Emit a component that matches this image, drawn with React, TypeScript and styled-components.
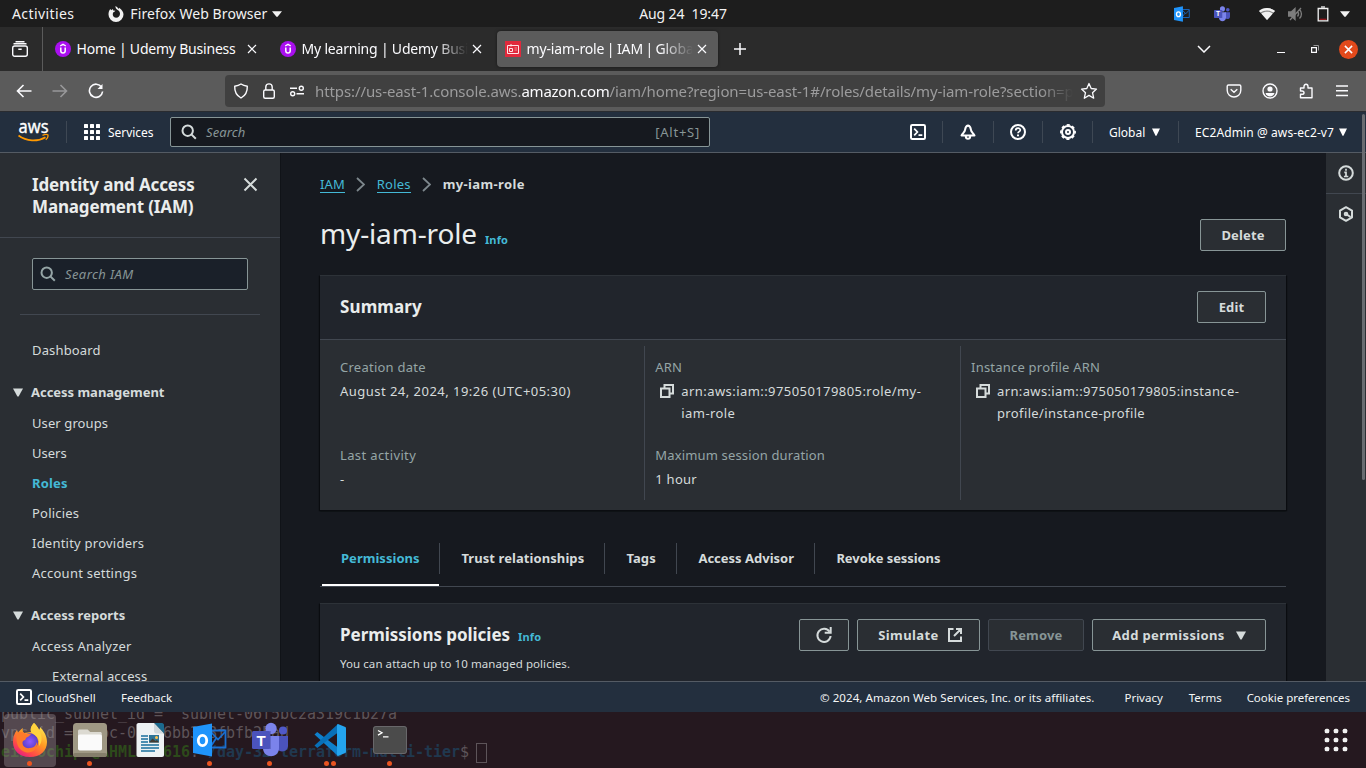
import React from "react";
import styled, { createGlobalStyle, css } from "styled-components";

const Global = createGlobalStyle`
  * { box-sizing: border-box; }
  html, body { margin: 0; padding: 0; background: #16191f; overflow: hidden; }
  svg { display: block; flex: none; }
`;

type Track = { $ls?: number };
const track = css<Track>`
  letter-spacing: ${(p) => p.$ls ?? 0.15}px;
  white-space: nowrap;
`;
const ui = `"Noto Sans", "Open Sans", sans-serif`;

const Screen = styled.div`
  width: 1366px;
  height: 768px;
  display: flex;
  flex-direction: column;
  overflow: hidden;
  position: relative;
  font-family: ${ui};
  font-size: 13px;
  color: #d5dbdb;
`;

/* ---------- desktop top bar ---------- */
const TopBar = styled.div`
  height: 27px;
  flex: none;
  background: #1d1d1d;
  display: grid;
  grid-template-columns: 1fr auto 1fr;
  align-items: center;
  color: #f2f2f2;
  font-size: 14px;
`;
const TopLeft = styled.div`
  display: flex;
  align-items: center;
  padding-left: 12px;
`;
const TopText = styled.span<Track & { $ml?: number }>`
  ${track}
  line-height: 27px;
  margin-left: ${(p) => p.$ml ?? 0}px;
`;
const TopRight = styled.div`
  display: flex;
  align-items: center;
  justify-content: flex-end;
  padding-right: 16px;
`;
const Slot = styled.span<{ $mr?: number; $ml?: number }>`
  display: flex;
  margin-right: ${(p) => p.$mr ?? 0}px;
  margin-left: ${(p) => p.$ml ?? 0}px;
`;

/* ---------- browser ---------- */
const TabStrip = styled.div`
  height: 44px;
  flex: none;
  background: #2b2b2b;
  display: flex;
  align-items: center;
`;
const TabView = styled.div`
  width: 43px;
  height: 44px;
  border-right: 1px solid #5b5b5b;
  display: flex;
  align-items: center;
  padding-left: 11px;
  margin-right: 4px;
`;
const BrowserTab = styled.div<{ $active?: boolean }>`
  width: 221px;
  height: 36px;
  margin-right: 4px;
  border-radius: 4px;
  padding-left: 8px;
  display: flex;
  align-items: center;
  background: ${(p) => (p.$active ? "#5b5b5b" : "transparent")};
  box-shadow: ${(p) => (p.$active ? "0 0 3px rgba(0,0,0,.5)" : "none")};
`;
const TabTitle = styled.span<Track & { $fade?: boolean; $ws?: number }>`
  ${track}
  width: 167px;
  margin-left: 5px;
  padding-left: 0.5px;
  overflow: hidden;
  font-size: 14px;
  line-height: 22px;
  word-spacing: ${(p) => p.$ws ?? 0}px;
  color: #fbfbfe;
  ${(p) => p.$fade && "mask-image: linear-gradient(to left, transparent 0, #000 32px);"}
`;
const WindowControls = styled.div`
  margin-left: auto;
  display: flex;
  align-items: center;
  padding-right: 8px;
`;
const BrowserActions = styled.div`
  margin-left: auto;
  display: flex;
  align-items: center;
`;
const CloseWindow = styled.span`
  width: 19px;
  height: 19px;
  border-radius: 50%;
  background: #e2491b;
  display: flex;
  align-items: center;
  justify-content: center;
`;
const Toolbar = styled.div`
  height: 41px;
  flex: none;
  background: #5b5b5b;
  border-bottom: 1px solid #2a2c30;
  display: flex;
  align-items: center;
  padding-left: 16px;
  padding-right: 18px;
`;
const UrlBar = styled.div`
  width: 880px;
  height: 32px;
  margin-left: 121px;
  border-radius: 4px;
  background: #404040;
  display: flex;
  align-items: center;
  padding-left: 8px;
`;
const Url = styled.span`
  width: 758px;
  margin-left: 10px;
  margin-right: 7px;
  overflow: hidden;
  white-space: nowrap;
  font-size: 15px;
  line-height: 24px;
  letter-spacing: -0.1px;
  color: #9c9c9d;
  mask-image: linear-gradient(to left, transparent 0, #000 32px);
`;
const Domain = styled.span`
  color: #fbfbfe;
  letter-spacing: -0.25px;
`;

/* ---------- console header ---------- */
const Nav = styled.div`
  height: 41px;
  flex: none;
  background: #232f3e;
  border-bottom: 1px solid #545b64;
  display: flex;
  align-items: center;
  padding-left: 18px;
  font-size: 12px;
  color: #fff;
`;
const NavText = styled.span<Track & { $w?: number }>`
  ${track}
  width: ${(p) => (p.$w ? `${p.$w}px` : "auto")};
  line-height: 20px;
  padding-top: 2px;
`;
const NavDivider = styled.span<{ $l: number; $r: number }>`
  width: 1px;
  height: 22px;
  background: #3e4854;
  margin: 0 ${(p) => p.$r}px 0 ${(p) => p.$l}px;
`;
const NavSearch = styled.div`
  width: 540px;
  height: 30px;
  margin-left: 16px;
  background: #16191f;
  border: 1px solid #879596;
  border-radius: 2px;
  display: flex;
  align-items: center;
  padding: 0 9px 0 10px;
  color: #879596;
  font-size: 13px;
`;
const Placeholder = styled.span<Track>`
  ${track}
  font-style: italic;
  flex: 1;
  margin-left: 9px;
`;
const Shortcut = styled.span`
  letter-spacing: 0.75px;
`;

/* ---------- page ---------- */
const Body = styled.div`
  height: 528px;
  flex: none;
  display: flex;
  background: #16191f;
  overflow: hidden;
`;
const Sidebar = styled.div`
  width: 281px;
  flex: none;
  background: #2a2e33;
  border-right: 1px solid #101318;
  overflow: hidden;
`;
const SideHead = styled.div`
  height: 85px;
  padding: 21px 22px 0 32px;
  border-bottom: 1px solid #414750;
  display: flex;
  justify-content: space-between;
`;
const SideTitle = styled.div<Track>`
  ${track}
  font-size: 17px;
  line-height: 22px;
  font-weight: 700;
  color: #eaeded;
`;
const SideClose = styled.span`
  padding-top: 3px;
`;
const SideSearch = styled.div`
  width: 216px;
  height: 32px;
  margin: 20px 0 24px 32px;
  border: 1px solid #879596;
  border-radius: 2px;
  background: #1a2029;
  display: flex;
  align-items: center;
  padding-left: 7px;
  color: #879596;
`;
const Rule = styled.div`
  height: 1px;
  margin: 0 20px;
  background: #414750;
`;
const NavLink = styled.div<Track & { $active?: boolean; $indent?: boolean; $top?: number }>`
  ${track}
  height: 30px;
  line-height: 30px;
  margin-top: ${(p) => p.$top ?? 0}px;
  padding-left: ${(p) => (p.$indent ? 52 : 32)}px;
  font-weight: ${(p) => (p.$active ? 700 : 400)};
  color: ${(p) => (p.$active ? "#44b9d6" : "#d5dbdb")};
`;
const NavGroup = styled.div<Track>`
  ${track}
  height: 30px;
  margin-top: 12px;
  padding-left: 13px;
  display: flex;
  align-items: center;
  gap: 8px;
  font-weight: 700;
`;
const Content = styled.div`
  width: 1045px;
  flex: none;
  padding: 20px 40px 0 39px;
`;
const Crumbs = styled.div`
  display: flex;
  align-items: center;
  height: 22px;
`;
const Crumb = styled.span<Track>`
  ${track}
  color: #44b9d6;
  line-height: 16px;
  border-bottom: 1px solid #44b9d6;
`;
const CrumbHere = styled.span<Track>`
  ${track}
  font-weight: 700;
`;
const TitleRow = styled.div`
  display: flex;
  align-items: center;
  justify-content: space-between;
  height: 36px;
  margin-top: 22px;
`;
const Baseline = styled.div<{ $up?: number }>`
  display: flex;
  align-items: baseline;
  gap: 8px;
  padding-bottom: ${(p) => p.$up ?? 0}px;
`;
const PageTitle = styled.span<Track>`
  ${track}
  font-size: 28px;
  line-height: 36px;
  color: #eaeded;
`;
const Info = styled.span`
  font-size: 11px;
  font-weight: 700;
  letter-spacing: 0.15px;
  color: #44b9d6;
`;
const Button = styled.span<Track & { $w: number; $gap?: number; $pad?: number; $disabled?: boolean }>`
  ${track}
  width: ${(p) => p.$w}px;
  height: 32px;
  flex: none;
  padding-left: ${(p) => p.$pad ?? 0}px;
  border: 1px solid ${(p) => (p.$disabled ? "#414750" : "#879596")};
  border-radius: 2px;
  background: #2a2e33;
  color: ${(p) => (p.$disabled ? "#879596" : "#d5dbdb")};
  font-weight: 700;
  display: flex;
  align-items: center;
  justify-content: center;
  gap: ${(p) => p.$gap ?? 9}px;
`;
const Card = styled.div<{ $top: number; $h: number }>`
  margin-top: ${(p) => p.$top}px;
  height: ${(p) => p.$h}px;
  background: #2a2e33;
  border-top: 1px solid #2d3238;
  box-shadow: 0 1px 1px #0b0d11, 1px 1px 1px #0b0d11, -1px 1px 1px #0b0d11;
`;
const CardHead = styled.div`
  height: 64px;
  background: #21252c;
  border-bottom: 1px solid #414750;
  display: flex;
  align-items: center;
  justify-content: space-between;
  padding: 0 20px 2px;
`;
const Heading = styled.span<Track & { $lh?: number }>`
  ${track}
  font-size: 17px;
  line-height: ${(p) => p.$lh ?? 22}px;
  font-weight: 700;
  color: #eaeded;
`;
const Columns = styled.div`
  display: grid;
  grid-template-columns: 325px 316px 325px;
  grid-template-rows: 154px;
  margin-top: 6px;
`;
const Column = styled.div<{ $first?: boolean }>`
  height: 154px;
  padding: 10px 10px 0 ${(p) => (p.$first ? 20 : 10.3)}px;
  border-right: 1px solid #414750;
  &:last-child { border-right: 0; padding-left: 10px; }
`;
const Field = styled.div<{ $last?: boolean }>`
  height: ${(p) => (p.$last ? 50 : 88)}px;
`;
const Label = styled.div<Track>`
  ${track}
  line-height: 22px;
  color: #95a5a6;
`;
const Value = styled.div<Track>`
  ${track}
  line-height: 22px;
  margin-top: 2px;
  display: flex;
  gap: 7px;
`;
const CopySlot = styled.span`
  padding: 4px 0 0 5px;
`;
const Tabs = styled.div`
  height: 44px;
  margin-top: 33px;
  border-bottom: 1px solid #414750;
  display: flex;
  padding-left: 2px;
`;
const Tab = styled.div<Track & { $w: number; $active?: boolean }>`
  ${track}
  width: ${(p) => p.$w}px;
  height: 43px;
  padding-left: ${(p) => (p.$active ? 19 : 21.4)}px;
  line-height: 31px;
  font-weight: 700;
  color: ${(p) => (p.$active ? "#44b9d6" : "#d5dbdb")};
  border-bottom: 2px solid ${(p) => (p.$active ? "#fff" : "transparent")};
`;
const TabDivider = styled.span`
  width: 1px;
  height: 31px;
  background: #414750;
`;
const PolicyHead = styled.div`
  height: 78px;
  background: #21252c;
  padding: 15px 20px 0;
  display: flex;
  justify-content: space-between;
`;
const PolicyNote = styled.div<Track>`
  ${track}
  font-size: 11.5px;
  line-height: 18px;
  margin-top: 5px;
`;
const Actions = styled.div`
  display: flex;
  gap: 8px;
`;
const Rail = styled.div`
  width: 40px;
  background: #2a2e33;
`;
const RailCell = styled.div`
  height: 41px;
  border-bottom: 1px solid #414750;
  display: flex;
  align-items: center;
  justify-content: center;
  &:last-child { border-bottom: 0; padding-bottom: 2px; }
`;
const Scrollbar = styled.div`
  position: absolute;
  left: 1362px;
  top: 114px;
  width: 3px;
  height: 366px;
  border-radius: 2px;
  background: #696c71;
`;
const Footer = styled.div`
  height: 31px;
  flex: none;
  background: #232f3e;
  border-top: 1px solid #545b64;
  display: flex;
  align-items: center;
  padding: 0 16px;
  font-size: 11.5px;
  color: #f4f6f6;
`;
const FootText = styled.span<Track & { $ml?: number }>`
  ${track}
  line-height: 28px;
  padding-top: 2px;
  margin-left: ${(p) => p.$ml ?? 0}px;
`;
const FootRight = styled.div`
  margin-left: auto;
  display: flex;
`;

/* ---------- dock over terminal ---------- */
const Terminal = styled.div`
  height: 56px;
  flex: none;
  position: relative;
  overflow: hidden;
  background: #25181f;
`;
const TermLines = styled.div`
  margin-top: -7px;
  padding-left: 1px;
  font-family: "DejaVu Sans Mono", monospace;
  font-size: 15px;
  letter-spacing: -0.03px;
  color: #5d5459;
`;
const TermLine = styled.div`
  height: 19px;
  line-height: 19px;
  white-space: pre;
  display: flex;
`;
const Prompt = styled.b<{ $c: string }>`
  color: ${(p) => p.$c};
`;
const Cursor = styled.span`
  width: 11px;
  height: 20px;
  border: 1px solid #5d5459;
  margin-left: 7px;
`;
const Dock = styled.div`
  position: absolute;
  inset: 0;
  display: flex;
`;
const DockItem = styled.div<{ $active?: boolean }>`
  width: 52px;
  height: 53px;
  margin: 2px 4px 0;
  border-radius: 4px;
  background: ${(p) => (p.$active ? "rgba(150,140,145,.42)" : "transparent")};
  display: flex;
  flex-direction: column;
  align-items: center;
  padding-top: 8px;
`;
const DockIcon = styled.div`
  height: 36px;
  display: flex;
  align-items: center;
`;
const Dots = styled.div`
  display: flex;
  gap: 2px;
  margin-top: 3px;
  padding-right: 1px;
`;
const Dot = styled.i`
  width: 5px;
  height: 5px;
  border-radius: 50%;
  background: #e95420;
`;
const AppGrid = styled.div`
  margin: 16px 18px 0 auto;
`;

type SP = { w: number; h?: number; vb?: string; c?: string; sw?: number; children: React.ReactNode };
const Line = ({ w, h = w, vb, c = "#fbfbfe", sw = 1.3, children }: SP) => (
  <svg width={w} height={h} viewBox={vb ?? `0 0 ${w} ${h}`} fill="none" stroke={c} strokeWidth={sw}>
    {children}
  </svg>
);

const Caret = ({ c = "#fff", w = 10, h = 9 }: { c?: string; w?: number; h?: number }) => (
  <svg width={w} height={h} viewBox="0 0 10 9" preserveAspectRatio="none"><path d="M0 0.5h10L5.6 8.6h-1.2z" fill={c} /></svg>
);
const CloseX = ({ s = 10, c = "#fbfbfe", sw = 1.2 }: { s?: number; c?: string; sw?: number }) => (
  <Line w={s} vb="0 0 10 10" c={c} sw={sw}><path d="M1 1l8 8M9 1l-8 8" /></Line>
);
const Search = ({ c }: { c: string }) => (
  <Line w={16} c={c} sw={2}><circle cx="6.7" cy="6.7" r="5.2" /><path d="M10.4 10.4l4.4 4.4" /></Line>
);
const Udemy = () => (
  <svg width="16" height="16" viewBox="0 0 16 16">
    <circle cx="8" cy="8" r="8" fill="#a90fef" />
    <path d="M5.2 5L8 3.3 10.8 5" fill="none" stroke="#fff" strokeWidth="1.4" />
    <path d="M5.8 6.6v3.2c0 3 4.4 3 4.4 0V6.6" fill="none" stroke="#fff" strokeWidth="1.5" />
  </svg>
);
const IamIcon = () => (
  <svg width="16" height="16" viewBox="0 0 16 16" fill="none" stroke="#ffe3e6" strokeWidth="1">
    <rect width="16" height="16" fill="#e0293c" stroke="none" />
    <path d="M2.5 4.5h11v8h-11zM6 3v2.5M4.5 7.5h3v3h-3z" />
    <path d="M9.5 7h2.5M9.5 9h2.5" stroke="#f08a92" />
  </svg>
);
const Shell = () => (
  <Line w={16} c="#fff" sw={2}><rect x="1" y="1" width="14" height="14" rx="1.3" /><path d="M4.2 4.7L7.4 8l-3.2 3.3M8.5 11.2h3.8" strokeWidth="1.7" /></Line>
);
const Outlook = ({ s }: { s: number }) => (
  <svg width={s} height={s} viewBox="0 0 34 34">
    <path d="M17 7.5h15.5v17H17z" fill="none" stroke="#1a6fd0" strokeWidth="1.8" />
    <path d="M18 9l7 7.5 7-7.5M17 24.5l6-9" fill="none" stroke="#1a6fd0" strokeWidth="1.8" />
    <path d="M0 4L19 0.5v33L0 30z" fill="#1f94fb" />
    <ellipse cx="9.5" cy="17.5" rx="4.2" ry="5.2" fill="none" stroke="#fff" strokeWidth="2.8" />
  </svg>
);
const Teams = ({ s }: { s: number }) => (
  <svg width={s} height={s} viewBox="0 0 36 36">
    <circle cx="31" cy="8.5" r="4" fill="#5059c9" />
    <path d="M25 14h11v10c0 6-8 7-11 3z" fill="#4b53bc" />
    <circle cx="19" cy="6.5" r="5.7" fill="#7b83eb" />
    <path d="M11 14h16v12c0 11-16 11-16 0z" fill="#7b83eb" />
    <rect x="10" y="9" width="9" height="18" fill="#4a52a8" opacity=".5" />
    <rect x="0" y="9" width="18" height="18" rx="1.5" fill="#4b53bc" />
    <text x="9" y="23.5" textAnchor="middle" fontFamily="Liberation Sans, sans-serif" fontWeight="700" fontSize="15" fill="#fff">T</text>
  </svg>
);
const Copy = () => (
  <Line w={14} c="#d5dbdb" sw={2}><path d="M4.5 3.5V1H13v8.5h-2.5M1 4.5h8.5V13H1z" /></Line>
);
const Chevron = () => (
  <Line w={9} h={15} c="#7d878c" sw={1.8}><path d="M1 1l7 6.5L1 14" /></Line>
);
const ReloadBig = () => (
  <Line w={18} c="#d5dbdb" sw={2}><path d="M14.6 5.8A6.6 6.6 0 1 0 15.6 10" /><path d="M15.7 1v5.8h-6" /></Line>
);

const Firefox = () => (
  <svg width="34" height="36" viewBox="0 0 34 36">
    <defs>
      <linearGradient id="ffBody" x1=".8" y1=".1" x2=".2" y2="1"><stop offset="0" stopColor="#ffe14a" /><stop offset=".4" stopColor="#ff9722" /><stop offset=".75" stopColor="#ff4a47" /><stop offset="1" stopColor="#e3178c" /></linearGradient>
      <radialGradient id="ffGlobe"><stop offset="0" stopColor="#9059ff" /><stop offset="1" stopColor="#5a3fc4" /></radialGradient>
    </defs>
    <path d="M21 1c2 2 4 4 5 7 1-1 1-2 1-3 4 4 7 9 7 15 0 9-7 15-17 15S0 29 0 20c0-5 1-8 4-12 0 1 1 2 1 3 1-2 3-4 5-5-1 2 0 4 1 5l7-1c-1-4 1-7 3-9z" fill="url(#ffBody)" />
    <circle cx="17" cy="19.5" r="8.2" fill="url(#ffGlobe)" />
    <path d="M4 11c3-2 7-1 9 1h5c-1 2-4 3-5 4 0 2-2 2-3 3-2 4 2 8 7 7 4 0 6-3 7-6 1 8-6 12-12 10S2 22 4 11z" fill="#ff7a2a" />
    <path d="M21 1c2 2 4 4 5 7 4 6 3 13 0 16 1-6-2-10-6-12-4-3-2-8 1-11z" fill="#ffd23e" />
  </svg>
);
const Files = () => (
  <svg width="34" height="34" viewBox="0 0 34 34">
    <rect width="34" height="34" rx="3.5" fill="#9f9884" /><rect y="30" width="34" height="4" rx="2" fill="#857e6b" />
    <path d="M5 8c0-1 .6-1.6 1.6-1.6h8L17.200 9h10c1 0 1.600.6 1.600 1.600V14H5z" fill="#dcdad2" />
    <rect x="5" y="11.5" width="24" height="16" rx="1.8" fill="#fafafa" />
  </svg>
);
const Writer = () => (
  <svg width="28" height="34" viewBox="0 0 28 34">
    <path d="M2.5 0H18l10 10.5V32c0 1-.6 2-2 2H2.5C1 34 .5 33 .5 32V2c0-1 .6-2 2-2z" fill="#eef2f4" />
    <path d="M18 0h8c1 0 2 1 2 2v8.5z" fill="#1b6a8e" /><path d="M18 0l10 10.5h-7.5C19 10.5 18 9.5 18 8z" fill="#cfd8dc" />
    <path d="M5 13h7M5 16h7M5 19h7M5 22h18M5 25h18M5 28h14" stroke="#1a6f9c" strokeWidth="1.3" />
    <rect x="13" y="12" width="10" height="7.5" fill="#2d7396" /><circle cx="20.5" cy="14.5" r="1.5" fill="#ffc44d" /><path d="M13 19.5l3.5-4 3 2.5 1.5-1 2 2.5z" fill="#453c33" />
  </svg>
);
const Code = () => (
  <svg width="32" height="32" viewBox="0 0 32 32">
    <path d="M.5 10.5L3.2 8 24 23.5V32z" fill="#0f80cc" />
    <path d="M.5 21.5L3.2 24 24 8.5V0z" fill="#0870b8" />
    <path d="M24 0l7.3 3c.5.3.7.7.7 1.2v23.6c0 .5-.2.9-.7 1.2L24 32c-.7-.2-1-.5-1-1V1c0-.5.3-.8 1-1z" fill="#24a4ee" />
  </svg>
);
const Term = () => (
  <svg width="34" height="34" viewBox="0 0 34 34">
    <rect y="3" width="34" height="28" rx="3" fill="#4b4b4b" /><rect x=".5" y="3.5" width="33" height="27" rx="2.5" fill="none" stroke="#68676a" />
    <path d="M5 7.5l4 2.3-4 2.3M10 13.8h5.5" fill="none" stroke="#fff" strokeWidth="1.3" />
  </svg>
);

const dock: { icon: React.ReactNode; dots: number; active?: boolean }[] = [
  { icon: <Firefox />, dots: 1, active: true },
  { icon: <Files />, dots: 1 },
  { icon: <Writer />, dots: 0 },
  { icon: <Outlook s={34} />, dots: 1 },
  { icon: <Teams s={36} />, dots: 1 },
  { icon: <Code />, dots: 2 },
  { icon: <Term />, dots: 1 },
];

export default function App() {
  return (
    <Screen>
      <Global />
      <TopBar>
        <TopLeft>
          <TopText $ls={0.4}>Activities</TopText>
          <Slot $ml={34} $mr={6}>
            <svg width="16" height="16" viewBox="0 0 16 16"><path fillRule="evenodd" fill="#f2f2f2" d="M7.5 0c1.6 1 2.6 1.7 3 3 .5-.2.5-.8.5-1.3C14 3.5 15.5 6 15.5 8.5A7.500 7.500 0 1 1 .5 8.5C.5 6.500 1 4.500 2.3 3l.9 1.3L5 3l.2 1.5 2.200.2c-.5 1-1.400 1.100-2.200 1.800C4 9 5.500 11.700 8 11.700c2.600 0 4-2 4-4 0-2.300-1.500-3.200-3-4.200C7.800 2.700 7.400 1.200 7.500 0z" /></svg>
          </Slot>
          <TopText $ls={0.09}>Firefox Web Browser</TopText>
          <Slot $ml={5}><Caret w={10} h={6} c="#f2f2f2" /></Slot>
        </TopLeft>
        <TopText $ls={-0.1}>Aug 24&nbsp; 19:47</TopText>
        <TopRight>
          <Slot $mr={24}><Outlook s={16} /></Slot>
          <Slot $mr={29}><Teams s={16} /></Slot>
          <Slot $mr={13}><svg width="16" height="12" viewBox="0 0 16 12"><path d="M0 3C4-.9 12-.9 16 3L8 12z" fill="#8a8a8a" /><path d="M0 3C4-.9 12-.9 16 3l-1.5 1.6C11 1.8 5 1.8 1.5 4.6z" fill="#f2f2f2" /><path d="M2.3 5.6C5.5 3 10.5 3 13.7 5.6L8 12z" fill="#f2f2f2" /></svg></Slot>
          <Slot $mr={14}><Line w={15} h={14} c="#7d7d7d" sw={1.3}><path d="M0.5 5h2.8L7 1.5v11L3.3 9H0.5z" fill="#7d7d7d" /><path d="M9.5 4.5c1.3 1.5 1.3 3.5 0 5M11.5 2.5c2.6 2.6 2.6 6.4 0 9M2 13L13 1" /></Line></Slot>
          <Slot $mr={11}><Line w={12} h={16} c="#f2f2f2" sw={1.3}><path d="M1.2 2.5h9.6v12.3H1.2z" /><path d="M4 1h4" /><path d="M2.5 13.3h7" stroke="#a0181e" strokeWidth="1.2" /></Line></Slot>
          <Caret w={10} h={6} c="#f2f2f2" />
        </TopRight>
      </TopBar>

      <TabStrip>
        <TabView>
          <Line w={18} sw={1.4}><rect x="1.7" y="6" width="14.6" height="10.3" rx="2" /><path d="M2.5 3.7h13M4.5 1.7h9M7.3 9.3h3.4" /></Line>
        </TabView>
        <BrowserTab><Udemy /><TabTitle $ls={-0.21}>Home | Udemy Business</TabTitle><Slot $ml={4}><CloseX /></Slot></BrowserTab>
        <BrowserTab><Udemy /><TabTitle $ls={-0.2} $fade>My learning | Udemy Business</TabTitle><Slot $ml={4}><CloseX /></Slot></BrowserTab>
        <BrowserTab $active><IamIcon /><TabTitle $ls={-0.13} $ws={-1} $fade>my-iam-role | IAM | Global</TabTitle><Slot $ml={4}><CloseX /></Slot></BrowserTab>
        <Slot $ml={12}><Line w={12} sw={1.5}><path d="M6 0v12M0 6h12" /></Line></Slot>
        <WindowControls>
          <Slot $mr={66}><Line w={14} h={8} sw={1.5}><path d="M1 1l6 6 6-6" /></Line></Slot>
          <Slot $mr={26}><Line w={8} h={8} sw={1}><path d="M0 7.5h8" /></Line></Slot>
          <Slot $mr={20}><Line w={8} h={8} sw={1.2}><path d="M0.6 2.6h4.8v4.8H0.6z" /><path d="M2.5 0.5h5v5" stroke="#999" strokeWidth="1" /></Line></Slot>
          <CloseWindow><CloseX s={9} sw={1.7} /></CloseWindow>
        </WindowControls>
      </TabStrip>

      <Toolbar>
        <Line w={16} sw={1.6}><path d="M15.5 8H1.5M7.5 2L1.5 8l6 6" /></Line>
        <Slot $ml={20}><Line w={16} sw={1.6} c="#98989a"><path d="M.5 8h14M8.5 2l6 6-6 6" /></Line></Slot>
        <Slot $ml={20}><Line w={16} sw={1.6}><path d="M13.6 4.2A6.6 6.6 0 1 0 14.6 8.5" /><path d="M14.5 1v5H9.5z" fill="#fbfbfe" stroke="none" /></Line></Slot>
        <UrlBar>
          <Line w={16} sw={1.4}><path d="M8 1c2 1.3 4.3 1.9 6.3 2.2.2 4.8-1.3 9-6.300 11.800C3 12.200 1.500 8 1.700 3.200 3.700 2.900 6 2.300 8 1z" strokeLinejoin="round" /></Line>
          <Slot $ml={12}><Line w={16} sw={1.4}><rect x="2.7" y="7" width="10.6" height="8.3" rx="1.5" /><path d="M4.8 7V4c0-4.2 6.4-4.2 6.4 0v3" /></Line></Slot>
          <Slot $ml={12}><Line w={16} sw={1.4}><circle cx="12.3" cy="5.3" r="2" /><path d="M1 5.3h7M7.5 10.7H15" /><circle cx="3.7" cy="10.7" r="2" /></Line></Slot>
          <Url>https://us-east-1.console.aws.<Domain>amazon.com</Domain>/iam/home?region=us-east-1#/roles/details/my-iam-role?section=permissions</Url>
          <Line w={18} sw={1.3}><path d="M9 1.5l2.2 5 5.3.6-4 3.6 1.2 5.5L9 13.4l-4.7 2.8 1.2-5.500-4-3.600 5.300-.6z" strokeLinejoin="round" /></Line>
        </UrlBar>
        <BrowserActions>
          <Line w={16} sw={1.4}><path d="M1.2 3.3c0-.8.5-1.3 1.3-1.3h11c.8 0 1.3.5 1.3 1.3v4c0 8.9-13.6 8.9-13.6 0zM4.700 6.200L8 9.300l3.300-3.100" /></Line>
          <Slot $ml={20}><Line w={16} sw={1.4}><circle cx="8" cy="8" r="7" /><circle cx="8" cy="6" r="2.6" fill="#fbfbfe" stroke="none" /><path d="M3.5 10h9c-1 4.5-8 4.5-9 0z" fill="#fbfbfe" stroke="none" /></Line></Slot>
          <Slot $ml={21}><Line w={16} sw={1.4}><path d="M1.5 5H5V3.5c0-3 4-3 4 0V5H13v9.800H1.500v-3.500H3c2.700 0 2.700-3.300 0-3.300H1.500z" strokeLinejoin="round" /></Line></Slot>
          <Slot $ml={21}><Line w={12} h={12} sw={1.4}><path d="M0 1h12M0 5.700h12M0 10.500h12" /></Line></Slot>
        </BrowserActions>
      </Toolbar>

      <Nav>
        <svg width="31" height="20" viewBox="0 0 31 20">
          <text x="0.5" y="11" fontFamily="Noto Sans, sans-serif" fontSize="18.5" textLength="30" lengthAdjust="spacingAndGlyphs" fill="#fff" stroke="#fff" strokeWidth=".35">aws</text>
          <path d="M0.5 13.5c8 6 19 6.5 27 1.7" fill="none" stroke="#f90" strokeWidth="1.8" />
          <path d="M24.5 13.3c2-.9 4.5-1 5.3-.5.4 1-.4 3.5-2 5" fill="none" stroke="#f90" strokeWidth="1.3" />
        </svg>
        <NavDivider $l={17} $r={17} />
        <svg width="16" height="16" viewBox="0 0 16 16" fill="#fff">
          {[0, 6, 12].map((y) => [0, 6, 12].map((x) => <rect key={`${x}-${y}`} x={x} y={y} width="4" height="4" rx=".5" />))}
        </svg>
        <Slot $ml={8}><NavText $ls={-0.05} $w={46}>Services</NavText></Slot>
        <NavSearch>
          <Search c="#d5dbdb" />
          <Placeholder $ls={0.1}>Search</Placeholder>
          <Shortcut>[Alt+S]</Shortcut>
        </NavSearch>
        <Slot $ml={200}><Shell /></Slot>
        <NavDivider $l={16} $r={17} />
        <Line w={16} c="#fff" sw={2}><path d="M8 1.5c-2 .5-2.7 2-2.9 4.2C4.9 8 3 9 1.5 11.5h13C13 9 11.1 8 10.9 5.7 10.7 3.5 10 2 8 1.5z" strokeLinejoin="round" /><path d="M5.8 12c0 3.8 4.4 3.8 4.4 0" /></Line>
        <NavDivider $l={17} $r={16} />
        <Line w={16} c="#fff" sw={2}><circle cx="8" cy="8" r="7" /><path d="M5.7 6.4c0-3 4.6-3 4.6-.3C10.3 7.7 8 7.6 8 9.3" strokeWidth="1.7" /><path d="M8 10.5v1.8" /></Line>
        <NavDivider $l={16} $r={17} />
        <Line w={16} c="#fff" sw={2}><circle cx="8" cy="8" r="6" /><circle cx="8" cy="8" r="7.1" strokeDasharray="3.1 2.476" strokeWidth="1.7" strokeDashoffset="1.55" /><circle cx="8" cy="8" r="2" /></Line>
        <NavDivider $l={16} $r={16} />
        <NavText $ls={0} $w={37}>Global</NavText>
        <Slot $ml={6}><Caret w={8} h={8} /></Slot>
        <NavDivider $l={18} $r={16} />
        <NavText $ls={0.1}>EC2Admin @ aws-ec2-v7</NavText>
        <Slot $ml={5}><Caret w={8} h={8} /></Slot>
      </Nav>

      <Body>
        <Sidebar>
          <SideHead>
            <SideTitle $ls={-0.15}>Identity and Access<br />Management (IAM)</SideTitle>
            <SideClose><CloseX s={15} c="#d5dbdb" sw={1.3} /></SideClose>
          </SideHead>
          <SideSearch><Search c="#95a5a6" /><Placeholder $ls={0.4}>Search IAM</Placeholder></SideSearch>
          <Rule />
          <NavLink $top={20}>Dashboard</NavLink>
          <NavGroup $ls={-0.02}><Caret c="#d5dbdb" w={10} h={9} />Access management</NavGroup>
          <NavLink $top={1} $ls={0.1}>User groups</NavLink>
          <NavLink $ls={0}>Users</NavLink>
          <NavLink $active>Roles</NavLink>
          <NavLink $ls={0.2}>Policies</NavLink>
          <NavLink $ls={0.23}>Identity providers</NavLink>
          <NavLink $ls={0.24}>Account settings</NavLink>
          <NavGroup $ls={0}><Caret c="#d5dbdb" w={10} h={9} />Access reports</NavGroup>
          <NavLink $top={1} $ls={0.22}>Access Analyzer</NavLink>
          <NavLink $indent>External access</NavLink>
        </Sidebar>

        <Content>
          <Crumbs>
            <Crumb $ls={0.1}>IAM</Crumb>
            <Slot $ml={11} $mr={12}><Chevron /></Slot>
            <Crumb $ls={0.2}>Roles</Crumb>
            <Slot $ml={11} $mr={12}><Chevron /></Slot>
            <CrumbHere $ls={0.38}>my-iam-role</CrumbHere>
          </Crumbs>
          <TitleRow>
            <Baseline $up={4}><PageTitle $ls={-0.15}>my-iam-role</PageTitle><Info>Info</Info></Baseline>
            <Button $w={86}>Delete</Button>
          </TitleRow>
          <Card $top={22} $h={235}>
            <CardHead><Heading $ls={0.12}>Summary</Heading><Button $w={69}>Edit</Button></CardHead>
            <Columns>
              <Column $first>
                <Field><Label $ls={0.25}>Creation date</Label><Value $ls={0.47}>August 24, 2024, 19:26 (UTC+05:30)</Value></Field>
                <Field $last><Label $ls={0.38}>Last activity</Label><Value>-</Value></Field>
              </Column>
              <Column>
                <Field><Label>ARN</Label><Value $ls={0.43}><CopySlot><Copy /></CopySlot><span>arn:aws:iam::975050179805:role/my-<br />iam-role</span></Value></Field>
                <Field $last><Label>Maximum session duration</Label><Value $ls={0.25}>1 hour</Value></Field>
              </Column>
              <Column>
                <Field><Label $ls={0.22}>Instance profile ARN</Label><Value $ls={0.37}><CopySlot><Copy /></CopySlot><span>arn:aws:iam::975050179805:instance-<br />profile/instance-profile</span></Value></Field>
              </Column>
            </Columns>
          </Card>
          <Tabs>
            <Tab $w={117} $active $ls={0.03}>Permissions</Tab><TabDivider />
            <Tab $w={164} $ls={0.08}>Trust relationships</Tab><TabDivider />
            <Tab $w={71} $ls={0.1}>Tags</Tab><TabDivider />
            <Tab $w={137} $ls={0}>Access Advisor</Tab><TabDivider />
            <Tab $w={150} $ls={-0.07}>Revoke sessions</Tab>
          </Tabs>
          <Card $top={16} $h={90}>
            <PolicyHead>
              <div>
                <Baseline><Heading $ls={-0.04} $lh={31}>Permissions policies</Heading><Info>Info</Info></Baseline>
                <PolicyNote $ls={0.07}>You can attach up to 10 managed policies.</PolicyNote>
              </div>
              <Actions>
                <Button $w={50}><ReloadBig /></Button>
                <Button $w={123} $ls={0.42} $pad={3}>Simulate<Line w={14} c="#d5dbdb" sw={2}><path d="M5.5 1H1v12h12V8.5M8 1h5v5M13 1L6 8" /></Line></Button>
                <Button $w={96} $disabled>Remove</Button>
                <Button $w={174} $ls={0.35} $gap={11}>Add permissions<Caret c="#d5dbdb" w={10} h={9} /></Button>
              </Actions>
            </PolicyHead>
          </Card>
        </Content>

        <Rail>
          <RailCell><Line w={16} c="#d5dbdb" sw={2}><circle cx="8" cy="8" r="6.8" /><path d="M6.3 7.3H8v4M5.9 11.5h4.4M8 3.7v2" strokeWidth="1.7" /></Line></RailCell>
          <RailCell><Line w={16} c="#d5dbdb" sw={2}><path d="M8 1.2l6 3.4v6.8l-6 3.4-6-3.4V4.6z" strokeLinejoin="round" /><path d="M8 8l4.5 3" /><circle cx="8" cy="8" r="1.3" /></Line></RailCell>
        </Rail>
      </Body>

      <Footer>
        <Shell />
        <FootText $ml={5} $ls={0.18}>CloudShell</FootText>
        <FootText $ml={25} $ls={0}>Feedback</FootText>
        <FootRight>
          <FootText $ls={0.07}>© 2024, Amazon Web Services, Inc. or its affiliates.</FootText>
          <FootText $ml={30} $ls={0}>Privacy</FootText>
          <FootText $ml={26} $ls={-0.05}>Terms</FootText>
          <FootText $ml={25} $ls={-0.03}>Cookie preferences</FootText>
        </FootRight>
      </Footer>

      <Terminal>
        <TermLines>
          <TermLine>public_subnet_id = "subnet-06f5bc2a319c1b27a</TermLine>
          <TermLine>vpc_id = "vpc-0a4e6bb3c8fbfb25ad</TermLine>
          <TermLine>
            <Prompt $c="#2d4a1b">einfochips@AHMLPC-616</Prompt>:<Prompt $c="#20384f">~/day-32-terraform-multi-tier</Prompt>$<Cursor />
          </TermLine>
        </TermLines>
        <Dock>
          {dock.map((d, i) => (
            <DockItem key={i} $active={d.active}>
              <DockIcon>{d.icon}</DockIcon>
              <Dots>{Array.from({ length: d.dots }, (_, k) => <Dot key={k} />)}</Dots>
            </DockItem>
          ))}
          <AppGrid>
            <svg width="24" height="24" viewBox="0 0 24 24" fill="#f2f2f2">
              {[3, 12, 21].map((y) => [3, 12, 21].map((x) => <rect key={`${x}-${y}`} x={x - 2.3} y={y - 2.3} width="4.6" height="4.6" rx="1.6" />))}
            </svg>
          </AppGrid>
        </Dock>
      </Terminal>
      <Scrollbar />
    </Screen>
  );
}
